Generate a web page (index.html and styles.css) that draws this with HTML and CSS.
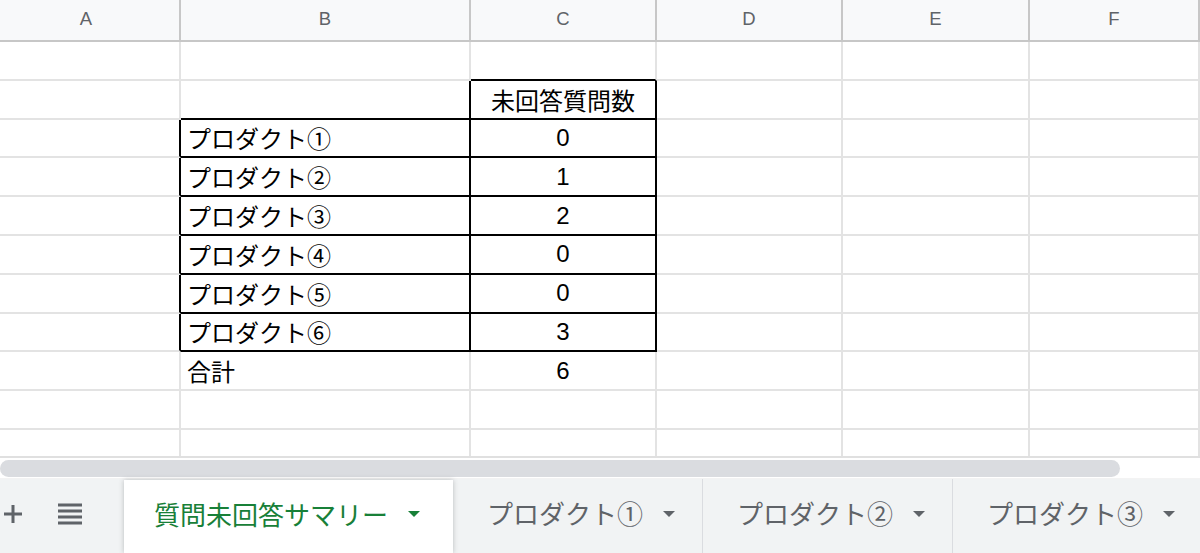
FILE: index.html
```html
<!DOCTYPE html>
<html lang="ja">
<head>
<meta charset="utf-8">
<title>質問未回答サマリー</title>
<link rel="stylesheet" href="styles.css">
</head>
<body>
<div class="sheet">
  <div class="grid">
    <div class="hd first">A</div><div class="hd">B</div><div class="hd">C</div><div class="hd">D</div><div class="hd">E</div><div class="hd">F</div>

    <div class="c"></div><div class="c"></div><div class="c bb"></div><div class="c"></div><div class="c"></div><div class="c"></div>

    <div class="c"></div><div class="c rb bb"></div><div class="c rb bb ctr">未回答質問数</div><div class="c"></div><div class="c"></div><div class="c"></div>

    <div class="c rb"></div><div class="c rb bb txt">プロダクト①</div><div class="c rb bb ctr">0</div><div class="c"></div><div class="c"></div><div class="c"></div>
    <div class="c rb"></div><div class="c rb bb txt">プロダクト②</div><div class="c rb bb ctr">1</div><div class="c"></div><div class="c"></div><div class="c"></div>
    <div class="c rb"></div><div class="c rb bb txt">プロダクト③</div><div class="c rb bb ctr">2</div><div class="c"></div><div class="c"></div><div class="c"></div>
    <div class="c rb"></div><div class="c rb bb txt">プロダクト④</div><div class="c rb bb ctr">0</div><div class="c"></div><div class="c"></div><div class="c"></div>
    <div class="c rb"></div><div class="c rb bb txt">プロダクト⑤</div><div class="c rb bb ctr">0</div><div class="c"></div><div class="c"></div><div class="c"></div>
    <div class="c rb"></div><div class="c rb bb txt">プロダクト⑥</div><div class="c rb bb ctr">3</div><div class="c"></div><div class="c"></div><div class="c"></div>

    <div class="c"></div><div class="c txt">合計</div><div class="c ctr">6</div><div class="c"></div><div class="c"></div><div class="c"></div>
    <div class="c"></div><div class="c"></div><div class="c"></div><div class="c"></div><div class="c"></div><div class="c"></div>
    <div class="c"></div><div class="c"></div><div class="c"></div><div class="c"></div><div class="c"></div><div class="c"></div>
  </div>
</div>
<div class="scroll"><div class="thumb"></div></div>
<div class="tabbar">
  <div class="tools">
    <svg class="plus" width="20" height="20" viewBox="0 0 20 20"><path d="M10 1v18M1 10h18" stroke="#5f6368" stroke-width="3"/></svg>
    <svg class="menu" width="24" height="22" viewBox="0 0 24 22"><path d="M0 2h24M0 8h24M0 14h24M0 20h24" stroke="#5f6368" stroke-width="3"/></svg>
  </div>
  <div class="tab active"><span class="label">質問未回答サマリー</span><span class="arrow"></span></div>
  <div class="tab"><span class="label">プロダクト①</span><span class="arrow"></span></div>
  <div class="tab"><span class="label">プロダクト②</span><span class="arrow"></span></div>
  <div class="tab"><span class="label">プロダクト③</span><span class="arrow"></span></div>
</div>
</body>
</html>
```
FILE: styles.css
```css
* { box-sizing: border-box; }
html, body { margin: 0; padding: 0; background: #fff; overflow: hidden; }
body { width: 1200px; height: 553px; font-family: "Liberation Sans", "Noto Sans CJK JP", sans-serif; }

.sheet {
  height: 458px;
  overflow: hidden;
  border-bottom: 2px solid #e0e0e0;
}
.grid {
  display: grid;
  grid-template-columns: 181px 290px 186px 186px 187px 170px;
  grid-template-rows: 42px repeat(11, 38.8px);
}
.hd {
  background: #f8f9fa;
  color: #5f6368;
  font-size: 18.5px;
  display: flex;
  align-items: center;
  justify-content: center;
  border-right: 2px solid #c7c7c7;
  border-bottom: 2px solid #c7c7c7;
  padding-bottom: 2px;
}
.hd.first { padding-right: 7px; }
.c {
  border-right: 2px solid #e3e3e3;
  border-bottom: 2px solid #e3e3e3;
  font-size: 24px;
  color: #000;
  display: flex;
  align-items: center;
  white-space: nowrap;
}
.c.rb { border-right-color: #000; }
.c.bb { border-bottom-color: #000; }
.txt { padding-left: 6px; }
.ctr { justify-content: center; }

.scroll {
  height: 21px;
  padding-top: 2px;
  border-bottom: 1px solid #f3f3f3;
}
.thumb {
  width: 1120px;
  height: 17px;
  background: #dadce0;
  border-radius: 9px;
}

.tabbar {
  height: 74px;
  background: #f1f3f4;
  display: flex;
  align-items: stretch;
  font-family: "Noto Sans CJK JP", "Liberation Sans", sans-serif;
}
.tools {
  flex: 0 0 124px;
  display: flex;
  align-items: center;
  padding-left: 3px;
  padding-bottom: 4px;
}
.menu { margin-left: 35px; }
.tab {
  flex: 0 0 250px;
  display: flex;
  align-items: center;
  padding: 0 20px 7px 34px;
  font-size: 26px;
  color: #5f6368;
  border-right: 1px solid #dadce0;
}
.tab.active {
  flex: 0 0 329px;
  background: #fff;
  color: #188038;
  padding-left: 30px;
  border-right: none;
  box-shadow: 0 0 5px rgba(60,64,67,0.3);
  position: relative;
  margin-top: 1px;
}
.label { white-space: nowrap; }
.arrow {
  flex: 0 0 auto;
  width: 0; height: 0;
  border-left: 6px solid transparent;
  border-right: 6px solid transparent;
  border-top: 6px solid #5f6368;
  margin-left: 20px;
  margin-top: 2px;
}
.tab.active .arrow { border-top-color: #188038; }
```
